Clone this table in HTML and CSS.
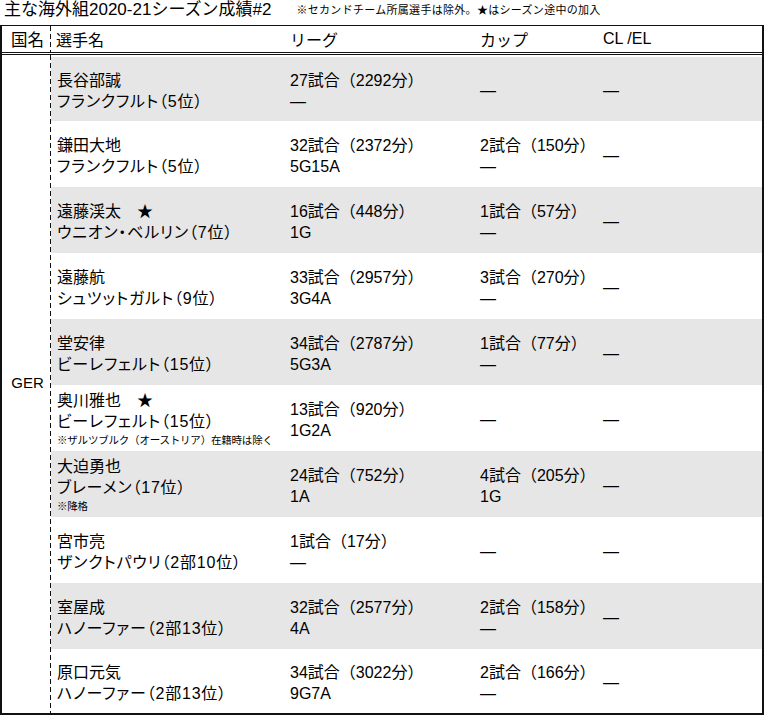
FILE: index.html
```html
<!DOCTYPE html>
<html lang="ja">
<head>
<meta charset="utf-8">
<link rel="stylesheet" href="styles.css">
</head>
<body>
<div class="title-bar">
  <h1 class="title">主な海外組2020-21シーズン成績#2</h1>
  <p class="note">※セカンドチーム所属選手は除外。★はシーズン途中の加入</p>
</div>
<div class="table">
  <div class="head">
    <div class="country-h">国名</div>
    <div class="cols">
      <div class="c-name">選手名</div>
      <div class="c-league">リーグ</div>
      <div class="c-cup">カップ</div>
      <div class="c-cl">CL /EL</div>
    </div>
  </div>
  <div class="body">
    <div class="country">GER</div>
    <div class="rows">
      <div class="row alt first">
        <div class="c-name"><span>長谷部誠</span><span class="club">フランクフルト（5位）</span></div>
        <div class="c-league"><span>27試合（2292分）</span><span>—</span></div>
        <div class="c-cup"><span>—</span></div>
        <div class="c-cl"><span>—</span></div>
      </div>
      <div class="row">
        <div class="c-name"><span>鎌田大地</span><span class="club">フランクフルト（5位）</span></div>
        <div class="c-league"><span>32試合（2372分）</span><span>5G15A</span></div>
        <div class="c-cup"><span>2試合（150分）</span><span>—</span></div>
        <div class="c-cl"><span>—</span></div>
      </div>
      <div class="row alt">
        <div class="c-name"><span>遠藤渓太　★</span><span class="club">ウニオン・ベルリン（7位）</span></div>
        <div class="c-league"><span>16試合（448分）</span><span>1G</span></div>
        <div class="c-cup"><span>1試合（57分）</span><span>—</span></div>
        <div class="c-cl"><span>—</span></div>
      </div>
      <div class="row">
        <div class="c-name"><span>遠藤航</span><span class="club">シュツットガルト（9位）</span></div>
        <div class="c-league"><span>33試合（2957分）</span><span>3G4A</span></div>
        <div class="c-cup"><span>3試合（270分）</span><span>—</span></div>
        <div class="c-cl"><span>—</span></div>
      </div>
      <div class="row alt">
        <div class="c-name"><span>堂安律</span><span class="club">ビーレフェルト（15位）</span></div>
        <div class="c-league"><span>34試合（2787分）</span><span>5G3A</span></div>
        <div class="c-cup"><span>1試合（77分）</span><span>—</span></div>
        <div class="c-cl"><span>—</span></div>
      </div>
      <div class="row">
        <div class="c-name"><span>奥川雅也　★</span><span class="club">ビーレフェルト（15位）</span><span class="small">※ザルツブルク（オーストリア）在籍時は除く</span></div>
        <div class="c-league"><span>13試合（920分）</span><span>1G2A</span></div>
        <div class="c-cup"><span>—</span></div>
        <div class="c-cl"><span>—</span></div>
      </div>
      <div class="row alt">
        <div class="c-name"><span>大迫勇也</span><span class="club">ブレーメン（17位）</span><span class="small">※降格</span></div>
        <div class="c-league"><span>24試合（752分）</span><span>1A</span></div>
        <div class="c-cup"><span>4試合（205分）</span><span>1G</span></div>
        <div class="c-cl"><span>—</span></div>
      </div>
      <div class="row">
        <div class="c-name"><span>宮市亮</span><span class="club">ザンクトパウリ（2部10位）</span></div>
        <div class="c-league"><span>1試合（17分）</span><span>—</span></div>
        <div class="c-cup"><span>—</span></div>
        <div class="c-cl"><span>—</span></div>
      </div>
      <div class="row alt">
        <div class="c-name"><span>室屋成</span><span class="club">ハノーファー（2部13位）</span></div>
        <div class="c-league"><span>32試合（2577分）</span><span>4A</span></div>
        <div class="c-cup"><span>2試合（158分）</span><span>—</span></div>
        <div class="c-cl"><span>—</span></div>
      </div>
      <div class="row last">
        <div class="c-name"><span>原口元気</span><span class="club">ハノーファー（2部13位）</span></div>
        <div class="c-league"><span>34試合（3022分）</span><span>9G7A</span></div>
        <div class="c-cup"><span>2試合（166分）</span><span>—</span></div>
        <div class="c-cl"><span>—</span></div>
      </div>
    </div>
  </div>
</div>
</body>
</html>
```
FILE: styles.css
```css
* { box-sizing: border-box; }
html, body { margin: 0; padding: 0; background: #fff; }
body {
  font-family: "Liberation Sans", "Noto Sans CJK JP", sans-serif;
  color: #000;
  width: 765px;
  height: 717px;
  overflow: hidden;
}
.title-bar {
  height: 25px;
  display: flex;
  align-items: flex-start;
  padding-left: 4px;
}
.title {
  margin: 0;
  font-size: 17px;
  font-weight: normal;
  line-height: 20px;
  letter-spacing: 0;
}
.note {
  margin: 2px 0 0 25px;
  font-size: 11px;
  line-height: 16px;
  letter-spacing: 0.3px;
}
.table {
  width: 764px;
  height: 690px;
  border: 2px solid #111;
  border-top-width: 1px;
  display: flex;
  flex-direction: column;
}
.head {
  display: flex;
  height: 29px;
  border-bottom: 3px double #111;
  font-size: 16px;
}
.country-h, .country {
  width: 49px;
  flex: none;
  background: repeating-linear-gradient(to bottom, #111 0 5px, transparent 5px 8px) right top / 1px 100% no-repeat;
}
.country-h {
  display: flex;
  align-items: center;
  justify-content: center;
  padding-left: 2px;
  font-size: 16.5px;
}
.cols {
  flex: 1;
  display: flex;
  align-items: center;
}
.cols .c-name { padding-left: 5px; }
.c-name { width: 239px; padding-left: 6px; flex: none; }
.c-league { width: 190px; flex: none; }
.c-cup { width: 123px; flex: none; }
.c-cl { flex: 1; }
.body {
  flex: 1;
  display: flex;
  min-height: 0;
}
.country {
  display: flex;
  align-items: center;
  justify-content: center;
  padding-left: 2px;
  padding-bottom: 4px;
  font-size: 15px;
}
.rows {
  flex: 1;
  display: flex;
  flex-direction: column;
  padding-top: 2px;
  min-height: 0;
  overflow: hidden;
}
.row {
  height: 66px;
  flex: none;
  display: flex;
  font-size: 16px;
  line-height: 21px;
}
.row.first { height: 64px; }
.row.last { flex: 1; }
.row.alt { background: #e7e6e6; }
.row > div {
  display: flex;
  flex-direction: column;
  justify-content: center;
  padding-top: 3px;
}
.row .club {
  font-feature-settings: "palt";
  letter-spacing: 0.8px;
}
.row .small {
  font-size: 10.5px;
  line-height: 17px;
  letter-spacing: -0.2px;
}
```
